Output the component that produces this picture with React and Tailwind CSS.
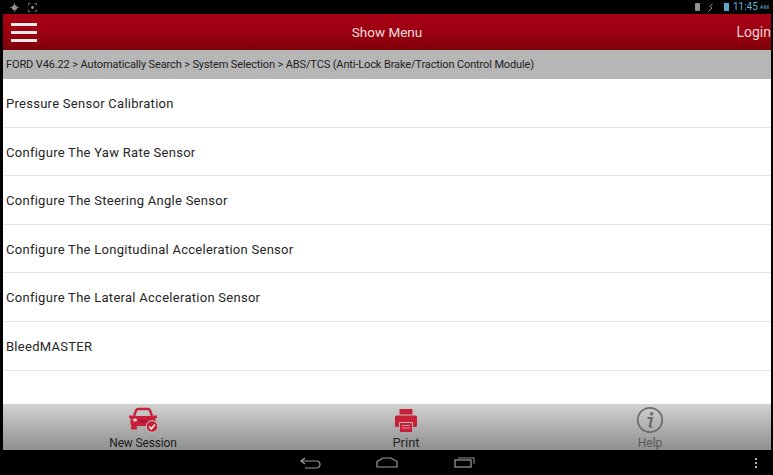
import React from 'react';

const menuItems = [
    'Pressure Sensor Calibration',
    'Configure The Yaw Rate Sensor',
    'Configure The Steering Angle Sensor',
    'Configure The Longitudinal Acceleration Sensor',
    'Configure The Lateral Acceleration Sensor',
    'BleedMASTER',
];

const CarIcon = () => (
    <svg width="32" height="26" viewBox="0 0 32 26" fill="none">
        <path d="M7 9 L9 3.5 Q9.6 2 11.5 2 H20.5 Q22.4 2 23 3.5 L25 9" stroke="#c9203a" strokeWidth="2.4" />
        <path d="M2 8.5 H5.5 V11 H2 Z M26.5 8.5 H30 V11 H26.5 Z" fill="#c9203a" />
        <path d="M3.5 12 Q3.5 9 6.5 9 H25.5 Q28.5 9 28.5 12 V17 Q28.5 19 26.5 19 H5.5 Q3.5 19 3.5 17 Z" fill="#c9203a" />
        <rect x="4" y="19" width="6" height="3.5" rx="1" fill="#c9203a" />
        <rect x="6" y="11.5" width="4" height="3" rx="1.5" fill="#d9d9d9" />
        <rect x="12" y="13" width="8" height="2.5" fill="#a81a30" />
        <circle cx="25" cy="19.5" r="5.8" fill="#c9203a" stroke="#c4c4c4" strokeWidth="1" />
        <path d="M22.3 19.5 L24.4 21.8 L28 17.6" stroke="#f2f2f2" strokeWidth="1.6" />
    </svg>
);

const PrintIcon = () => (
    <svg width="24" height="25" viewBox="0 0 24 25">
        <rect x="5.5" y="1" width="13" height="5.5" fill="#c9203a" />
        <path d="M2.5 7.5 H21.5 Q23 7.5 23 9 V17.5 Q23 19 21.5 19 H19 V14 H5 V19 H2.5 Q1 19 1 17.5 V9 Q1 7.5 2.5 7.5 Z" fill="#c9203a" />
        <rect x="6" y="15" width="12" height="9" fill="#c9203a" />
        <path d="M8 17.5 H16 M8 20 H16" stroke="#d08a95" strokeWidth="1" />
    </svg>
);

const HelpIcon = () => (
    <svg width="28" height="28" viewBox="0 0 28 28" fill="none">
        <circle cx="14" cy="14" r="12.2" stroke="#6c6c6c" strokeWidth="1.7" />
        <circle cx="15.6" cy="7.8" r="1.8" fill="#6c6c6c" />
        <path d="M11.6 12 H15.8 L13.8 20 Q13.6 21 15.8 20.4" stroke="#6c6c6c" strokeWidth="2.2" />
    </svg>
);

const App = () => {
    return (
        <div className="w-[773px] h-[475px] bg-black flex flex-col overflow-hidden font-['Roboto',sans-serif]">
            {/* status bar */}
            <div className="h-[14px] flex items-center justify-between pl-[10px] pr-[4px]">
                <div className="flex items-center gap-[9px]">
                    <svg width="9" height="9" viewBox="0 0 9 9" fill="none">
                        <circle cx="4.5" cy="4.5" r="2.6" fill="#9a9a9a" />
                        <path d="M4.5 0 V9 M0 4.5 H9" stroke="#8a8a8a" strokeWidth="0.8" />
                    </svg>
                    <svg width="9" height="9" viewBox="0 0 9 9" fill="none">
                        <path d="M0.5 2.5 V0.5 H2.5 M6.5 0.5 H8.5 V2.5 M8.5 6.5 V8.5 H6.5 M2.5 8.5 H0.5 V6.5" stroke="#8a8a8a" strokeWidth="0.8" />
                        <circle cx="4.5" cy="4.5" r="1.4" fill="#9a9a9a" />
                    </svg>
                </div>
                <div className="flex items-center">
                    <div className="w-[5px] h-[8px] rounded-[1px] bg-[#8a9490]" />
                    <svg className="ml-[7px]" width="7" height="9" viewBox="0 0 7 9" fill="none">
                        <path d="M5.5 0.5 L3 3.5 L5 5 L1.5 8.5" stroke="#8a8a8a" strokeWidth="1" />
                    </svg>
                    <div className="ml-[10px] w-[5px] h-[8px] bg-[#5aa6c8]" />
                    <span className="ml-[4px] text-[10px] leading-none text-[#5fb4d6]">11:45</span>
                    <span className="ml-[2px] text-[6px] leading-none text-[#5fb4d6]">AM</span>
                </div>
            </div>

            {/* app area */}
            <div className="flex-1 min-h-0 ml-[3px] mr-[2px] flex flex-col">
                <header className="h-[36px] grid grid-cols-[1fr_auto_1fr] items-center bg-gradient-to-b from-[#a80014] via-[#9c0010] to-[#7e0208]">
                    <div className="ml-[8px] flex flex-col gap-[5px]">
                        <div className="w-[26px] h-[3px] bg-[#f5e8e8]" />
                        <div className="w-[26px] h-[3px] bg-[#f5e8e8]" />
                        <div className="w-[26px] h-[3px] bg-[#f5e8e8]" />
                    </div>
                    <span className="text-[13.5px] text-[#f4dcdc]">Show Menu</span>
                    <span className="justify-self-end text-[14px] text-[#f6d4d4]">Login</span>
                </header>

                <div className="h-[29px] flex items-center pl-[3px] pt-[2px] bg-[#b6b6b6] text-[11px] tracking-[-0.125px] text-[#222222]">
                    FORD V46.22 &gt; Automatically Search &gt; System Selection &gt; ABS/TCS (Anti-Lock Brake/Traction Control Module)
                </div>

                <ul className="flex-1 min-h-0 bg-white">
                    {menuItems.map(item => (
                        <li key={item} className="h-[48.6px] flex items-center pl-[3px] pt-[2px] border-b border-[#e6e6e6] text-[13px] tracking-[0.275px] text-[#262626]">
                            {item}
                        </li>
                    ))}
                </ul>

                <footer className="h-[46px] grid grid-cols-[280px_246px_1fr] bg-gradient-to-b from-[#d2d2d2] to-[#8f8f8f]">
                    <div className="flex flex-col items-center">
                        <div className="h-[32px] flex items-center"><CarIcon /></div>
                        <span className="pt-[1px] text-[12px] leading-[12px] tracking-[-0.15px] text-[#1c1c1c]">New Session</span>
                    </div>
                    <div className="flex flex-col items-center">
                        <div className="h-[32px] flex items-center"><PrintIcon /></div>
                        <span className="pt-[1px] text-[13px] leading-[12px] text-[#262626]">Print</span>
                    </div>
                    <div className="flex flex-col items-center">
                        <div className="h-[32px] flex items-center"><HelpIcon /></div>
                        <span className="pt-[1px] text-[12px] leading-[12px] text-[#5a5a5a]">Help</span>
                    </div>
                </footer>
            </div>

            {/* android nav bar */}
            <nav className="h-[25px] flex items-center pl-[300px] pr-[16px]">
                <svg width="21" height="12" viewBox="0 0 21 12" fill="none">
                    <path d="M5 1 L1 4 L5 7 M1 4 H16 Q20 4 20 7.5 Q20 11 16 11 H5" stroke="#9a9a9a" strokeWidth="1.2" />
                </svg>
                <svg className="ml-[55px]" width="22" height="11" viewBox="0 0 22 11" fill="none">
                    <path d="M1 4.5 L7 1 H15 L21 4.5 V10 H1 Z" stroke="#9a9a9a" strokeWidth="1.2" />
                </svg>
                <svg className="ml-[56px]" width="21" height="11" viewBox="0 0 21 11" fill="none">
                    <rect x="1" y="3" width="16" height="7" stroke="#a0a0a0" strokeWidth="1.2" />
                    <path d="M4 1 H20 V7" stroke="#8a8a8a" strokeWidth="1.1" />
                </svg>
                <div className="ml-auto flex flex-col gap-[2px]">
                    <div className="w-[2px] h-[2px] bg-[#b0b0b0]" />
                    <div className="w-[2px] h-[2px] bg-[#b0b0b0]" />
                    <div className="w-[2px] h-[2px] bg-[#b0b0b0]" />
                </div>
            </nav>
        </div>
    );
};

export default App;
